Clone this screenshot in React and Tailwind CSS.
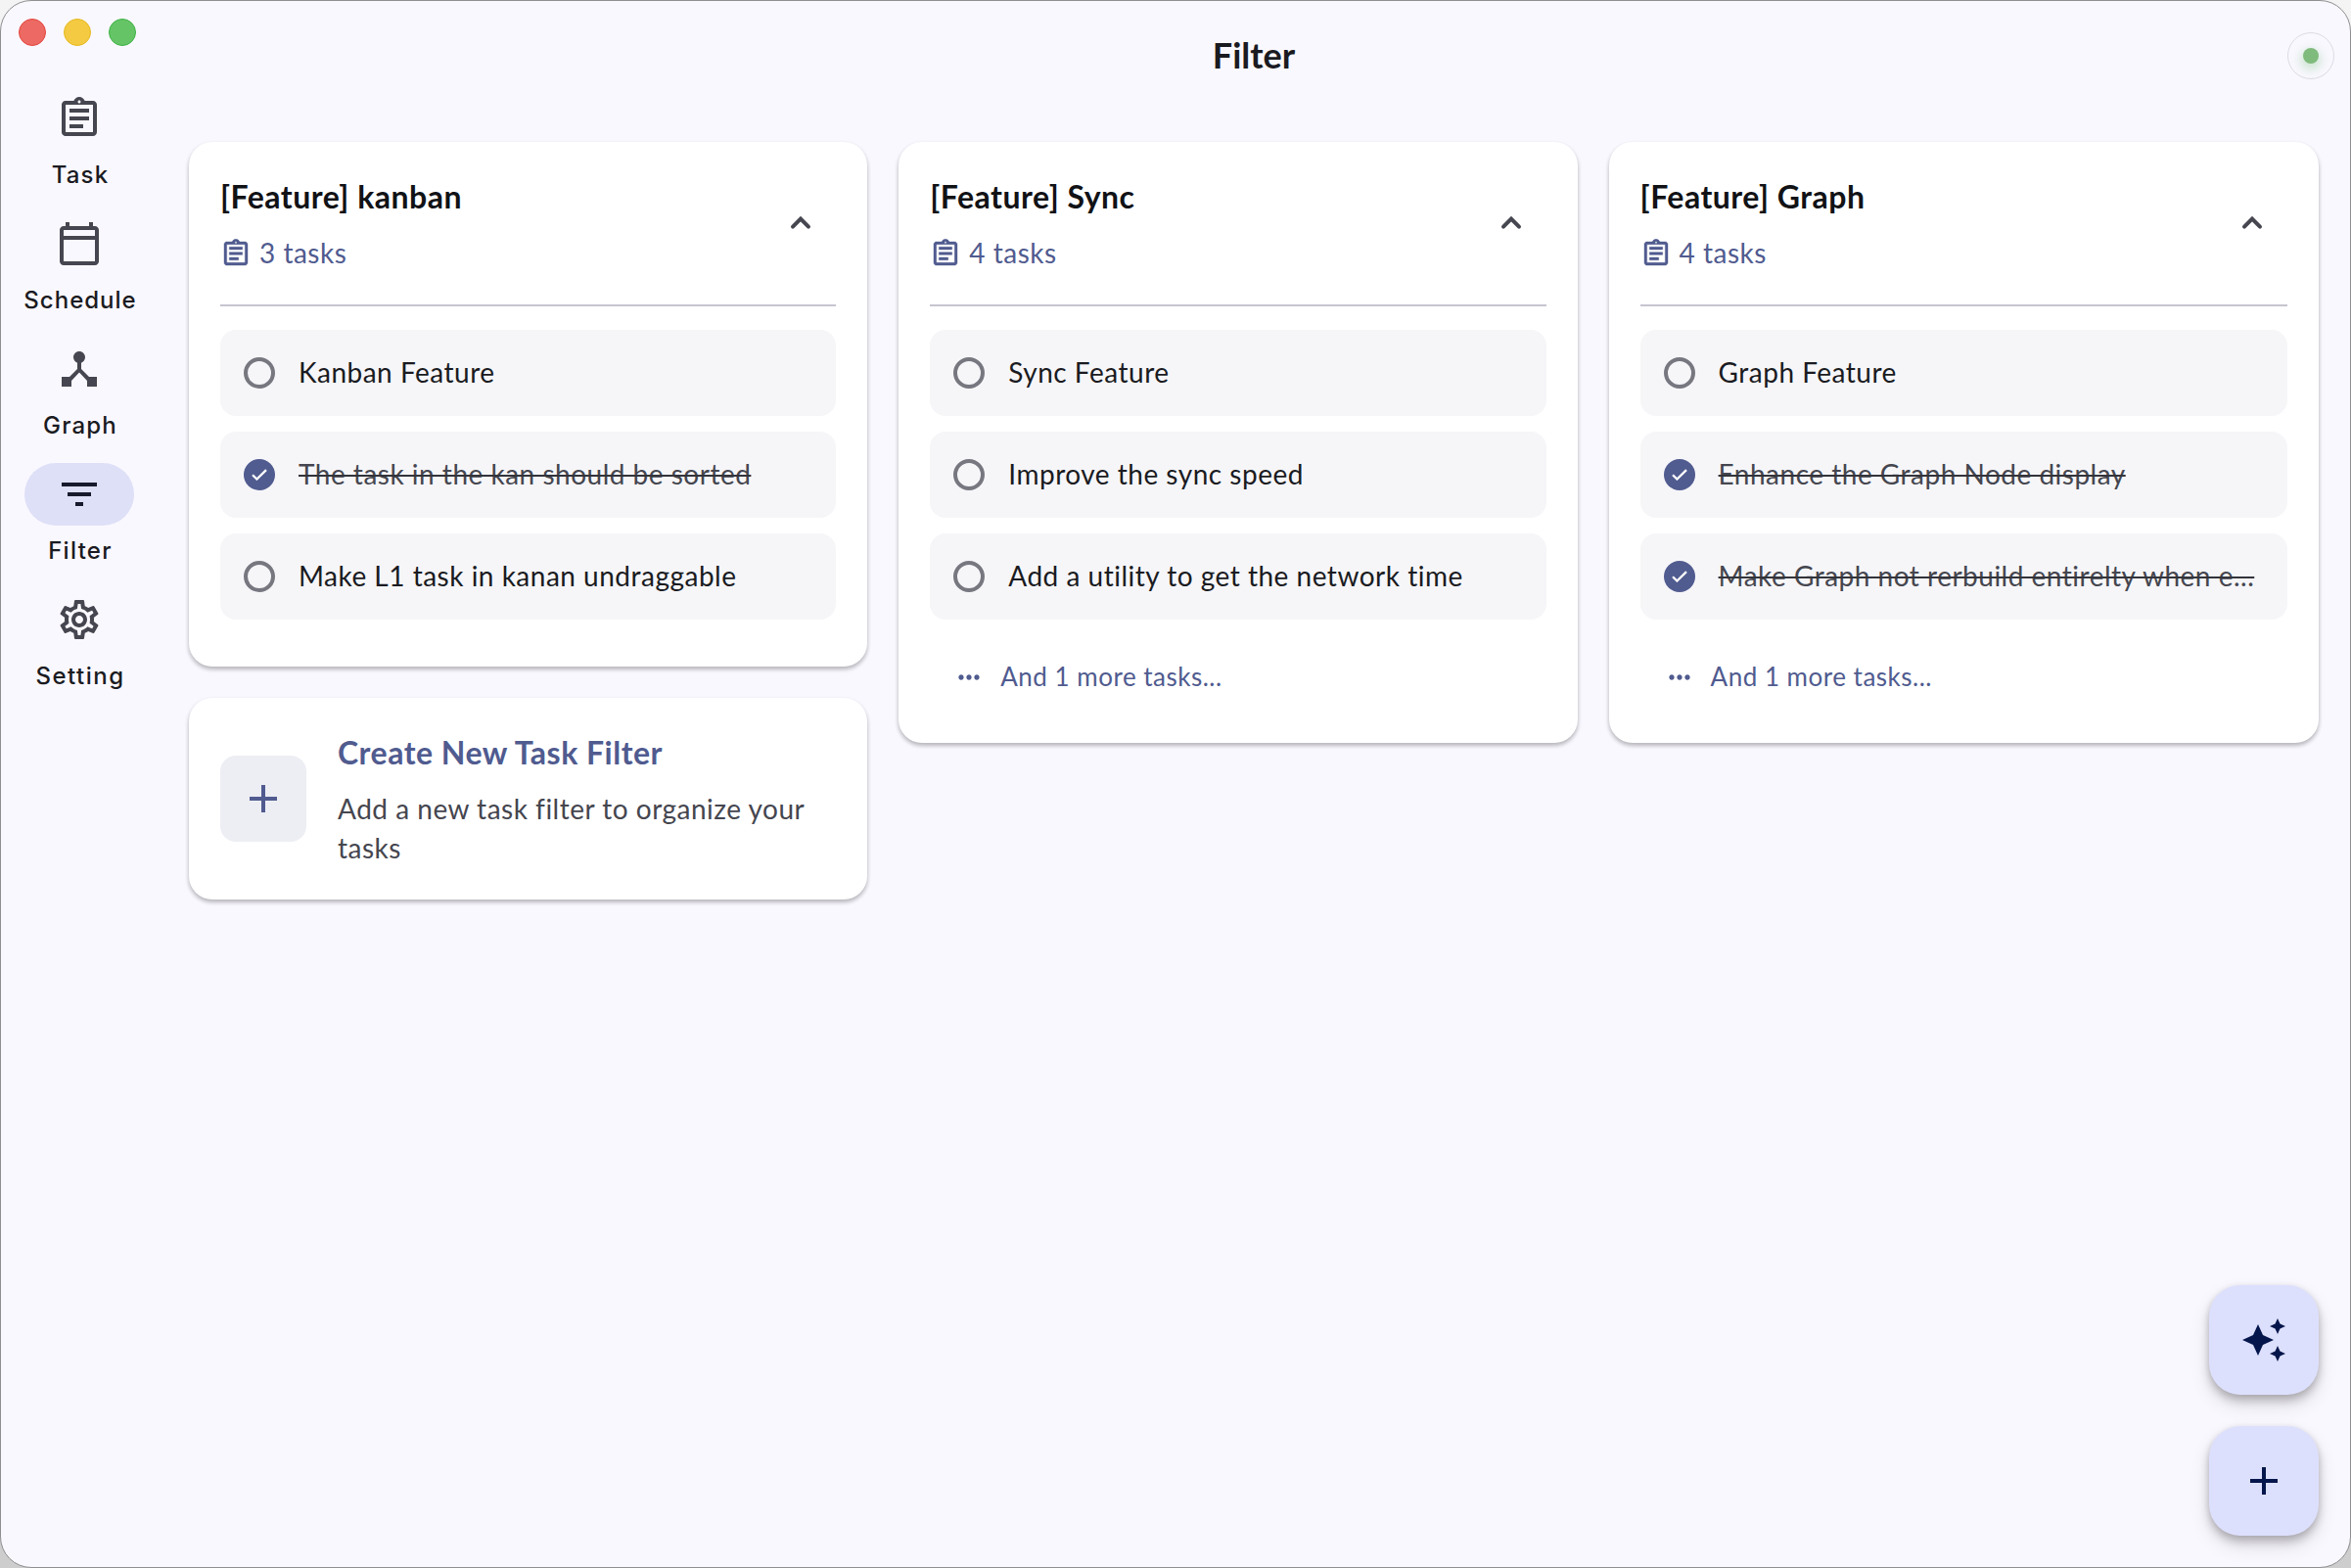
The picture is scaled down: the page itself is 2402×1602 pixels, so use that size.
import {
  MdOutlineAssignment,
  MdFilterList,
  MdOutlineSettings,
  MdAdd,
  MdAutoAwesome,
  MdMoreHoriz,
} from "react-icons/md";

function CalendarIcon({ className }) {
  return (
    <svg viewBox="0 0 24 24" fill="currentColor" className={className}>
      <path d="M20 3h-1V1h-2v2H7V1H5v2H4c-1.1 0-2 .9-2 2v16c0 1.1.9 2 2 2h16c1.1 0 2-.9 2-2V5c0-1.1-.9-2-2-2zm0 18H4V10h16v11zm0-13H4V5h16v3z" />
    </svg>
  );
}

function HubIcon({ className }) {
  return (
    <svg viewBox="0 0 24 24" fill="currentColor" className={className}>
      <path d="M17 16l-4-4V8.82C14.16 8.4 15 7.3 15 6c0-1.66-1.34-3-3-3S9 4.34 9 6c0 1.3.84 2.4 2 2.82V12l-4 4H3v5h5v-3.05l4-4.2 4 4.2V21h5v-5h-4z" />
    </svg>
  );
}

function ChevronUpIcon({ className }) {
  return (
    <svg
      viewBox="0 0 40 40"
      fill="none"
      stroke="currentColor"
      strokeWidth="4"
      strokeLinecap="round"
      className={className}
    >
      <path d="M12 23.6l8-8 8 8" strokeLinejoin="miter" />
    </svg>
  );
}

const NAV = [
  { label: "Task", Icon: MdOutlineAssignment, spacing: "tracking-[1.2px]" },
  { label: "Schedule", Icon: CalendarIcon, spacing: "tracking-[1px]" },
  { label: "Graph", Icon: HubIcon, spacing: "tracking-[1.2px]" },
  { label: "Filter", Icon: MdFilterList, spacing: "tracking-[1.3px]", active: true },
  { label: "Setting", Icon: MdOutlineSettings, spacing: "tracking-[1.5px]" },
];

const KANBAN = {
  title: "[Feature] kanban",
  count: 3,
  tasks: [
    { text: "Kanban Feature" },
    { text: "The task in the kan should be sorted", done: true },
    { text: "Make L1 task in kanan undraggable" },
  ],
};

const SYNC = {
  title: "[Feature] Sync",
  count: 4,
  tasks: [
    { text: "Sync Feature" },
    { text: "Improve the sync speed" },
    { text: "Add a utility to get the network time" },
  ],
  more: 1,
};

const GRAPH = {
  title: "[Feature] Graph",
  count: 4,
  tasks: [
    { text: "Graph Feature" },
    { text: "Enhance the Graph Node display", done: true },
    { text: "Make Graph not rerbuild entirelty when e...", done: true },
  ],
  more: 1,
};

const CARD =
  "rounded-[24px] bg-white shadow-[0_3px_4px_rgba(0,0,0,0.2),0_2px_5px_rgba(0,0,0,0.1)]";

function TaskRow({ text, done }) {
  return (
    <li className="flex h-[88px] items-center gap-6 rounded-[16px] bg-[#f6f6f9] px-6">
      {done ? (
        <span className="flex size-8 shrink-0 items-center justify-center rounded-full bg-[#505b8f]">
          <svg viewBox="0 0 16 12" className="h-3 w-4" fill="none" stroke="white" strokeWidth="2.3">
            <path d="M1 6.2l4.4 4.3L15 1.2" />
          </svg>
        </span>
      ) : (
        <span className="size-8 shrink-0 rounded-full border-4 border-[#777780]" />
      )}
      <span
        className={
          done
            ? "pb-0.5 whitespace-nowrap text-[#45464f] line-through decoration-[#33343b] decoration-2"
            : "pb-0.5 whitespace-nowrap"
        }
      >
        {text}
      </span>
    </li>
  );
}

function FilterCard({ title, count, tasks, more }) {
  return (
    <section className={`${CARD} px-8 pt-8 ${more ? "pb-6" : "pb-12"}`}>
      <header className="flex h-[102px] items-center justify-between pr-4">
        <div className="h-[102px]">
          <h2 className="text-[32px] leading-[48px] font-bold text-[#111216]">{title}</h2>
          <div className="mt-[18px] flex h-8 items-center gap-2 text-[#505b8f]">
            <MdOutlineAssignment className="size-8 [&>path:not([fill=none])]:stroke-current [&>path:not([fill=none])]:stroke-[0.3]" />
            <span className="pb-0.5">{count} tasks</span>
          </div>
        </div>
        <ChevronUpIcon className="size-10 text-[#45464f]" />
      </header>
      <hr className="mt-8 mb-6 border-t-2 border-[#c6c5d0]" />
      <ul className="flex flex-col gap-4">
        {tasks.map((task) => (
          <TaskRow key={task.text} {...task} />
        ))}
      </ul>
      {more && (
        <div className="mt-4 flex h-[86px] items-center gap-4 px-6 text-[26px] text-[#505b8f]">
          <MdMoreHoriz className="size-8" />
          <span className="pb-[3px]">And {more} more tasks...</span>
        </div>
      )}
    </section>
  );
}

function Fab({ children }) {
  return (
    <button className="flex size-28 items-center justify-center rounded-[32px] bg-[#dde0fd] text-[#04164b] shadow-[0_6px_10px_rgba(0,0,0,0.2),0_10px_20px_rgba(0,0,0,0.12),0_1px_6px_rgba(0,0,0,0.08)]">
      {children}
    </button>
  );
}

export default function App() {
  return (
    <div className="h-[1602px] w-[2402px] overflow-hidden bg-linear-to-b from-[#f4f4f4] to-[#cdcdcd] font-['Lato',sans-serif] text-[28px] leading-[40px] tracking-[0.5px] text-[#1a1b21]">
      <div className="relative flex size-full overflow-hidden rounded-[32px] border border-[#8e8e90] bg-[#faf8ff]">
        <aside className="w-[160px] shrink-0">
          <div className="flex h-[88px] gap-[18px] pt-[18px] pl-[18px]">
            <span className="size-7 rounded-full border border-[#e2463f] bg-[#ec6a63]" />
            <span className="size-7 rounded-full border border-[#e5b91f] bg-[#f3ca42]" />
            <span className="size-7 rounded-full border border-[#3fb146] bg-[#65c566]" />
          </div>
          <nav className="flex flex-col gap-[22px]">
            {NAV.map(({ label, Icon, spacing, active }) => (
              <a key={label} className="flex flex-col items-center gap-2.5">
                <span
                  className={
                    active
                      ? "flex h-16 w-28 items-center justify-center rounded-full bg-[#dee0f7] text-[#171a2c]"
                      : "flex h-16 w-28 items-center justify-center text-[#45464f]"
                  }
                >
                  <Icon className="size-12" />
                </span>
                <span
                  className={`pl-0.5 font-['Inter',sans-serif] text-[24px] leading-8 font-medium ${spacing}`}
                >
                  {label}
                </span>
              </a>
            ))}
          </nav>
        </aside>

        <main className="flex min-w-0 flex-1 flex-col">
          <div className="grid h-28 grid-cols-[1fr_auto_1fr] items-center pr-4">
            <h1 className="col-start-2 pb-0.5 pl-4 text-[36px] leading-[48px] font-bold tracking-normal">
              Filter
            </h1>
            <div className="flex size-12 items-center justify-center justify-self-end rounded-full border border-[#dcdbe3]">
              <span className="size-4 rounded-full bg-[#7fbb7c] shadow-[0_4px_12px_2px_rgba(76,175,80,0.3)]" />
            </div>
          </div>
          <div className="grid grid-cols-[693.3px_693.3px_725px] items-start gap-8 pt-8 pl-8">
            <div className="flex flex-col gap-8">
              <FilterCard {...KANBAN} />
              <section className={`${CARD} flex items-center gap-8 px-8 pt-8 pb-[33px]`}>
                <span className="flex size-[88px] shrink-0 items-center justify-center rounded-[16px] bg-[#edeef4] text-[#505b8f]">
                  <MdAdd className="size-12" />
                </span>
                <div>
                  <h2 className="text-[32px] leading-[48px] font-bold tracking-[0.5px] text-[#505b8f]">
                    Create New Task Filter
                  </h2>
                  <p className="mt-[13px] text-[#45464f]">
                    Add a new task filter to organize your tasks
                  </p>
                </div>
              </section>
            </div>
            <FilterCard {...SYNC} />
            <FilterCard {...GRAPH} />
          </div>
        </main>

        <div className="absolute right-8 bottom-8 flex flex-col gap-8">
          <Fab>
            <MdAutoAwesome className="size-12" />
          </Fab>
          <Fab>
            <MdAdd className="size-12" />
          </Fab>
        </div>
      </div>
    </div>
  );
}
